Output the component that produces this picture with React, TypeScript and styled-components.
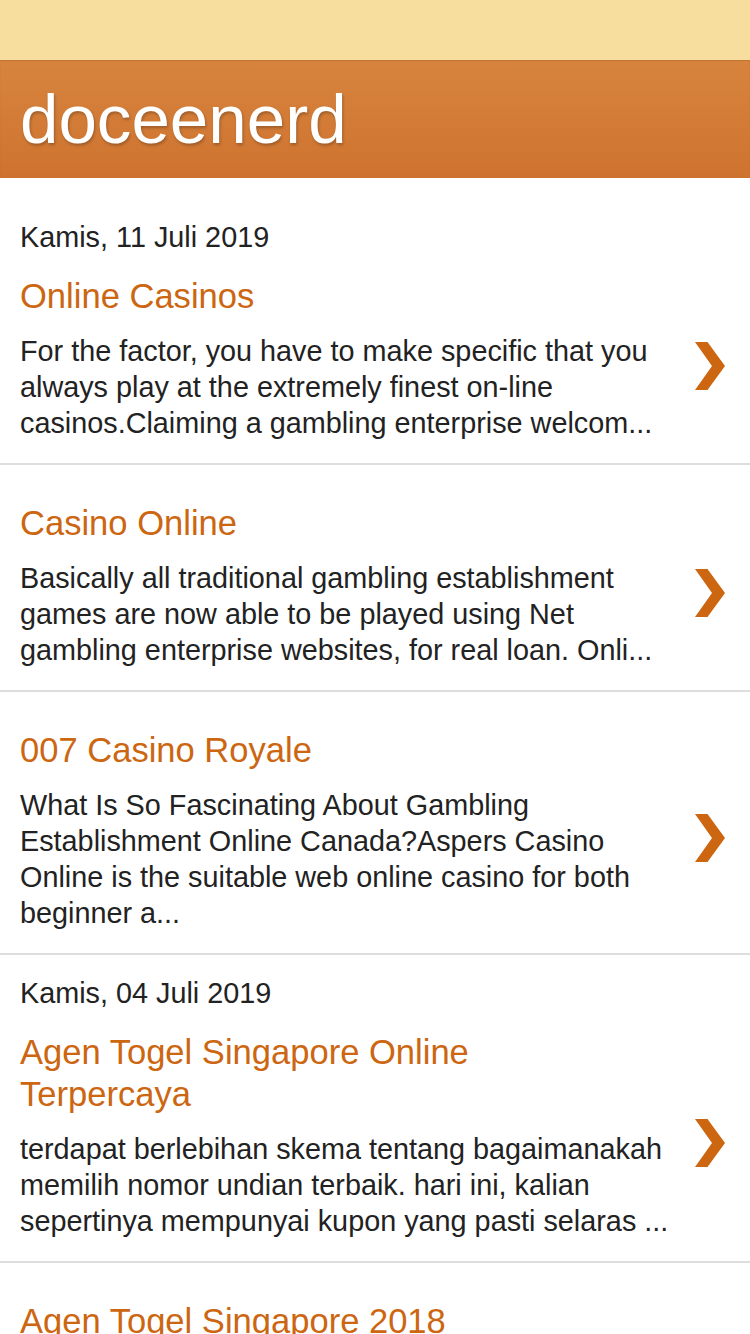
import React from "react";
import styled, { createGlobalStyle } from "styled-components";

interface Post {
    date?: string;
    title: string;
    snippet: string;
}

const posts: Post[] = [
    {
        date: "Kamis, 11 Juli 2019",
        title: "Online Casinos",
        snippet:
            "For the factor, you have to make specific that you always play at the extremely finest on-line casinos.Claiming a gambling enterprise welcom...",
    },
    {
        title: "Casino Online",
        snippet:
            "Basically all traditional gambling establishment games are now able to be played using Net gambling enterprise websites, for real loan. Onli...",
    },
    {
        title: "007 Casino Royale",
        snippet:
            "What Is So Fascinating About Gambling Establishment Online Canada?Aspers Casino Online is the suitable web online casino for both beginner a...",
    },
    {
        date: "Kamis, 04 Juli 2019",
        title: "Agen Togel Singapore Online Terpercaya",
        snippet:
            "terdapat berlebihan skema tentang bagaimanakah memilih nomor undian terbaik. hari ini, kalian sepertinya mempunyai kupon yang pasti selaras ...",
    },
    {
        title: "Agen Togel Singapore 2018",
        snippet:
            "Togel singapore adalah permainan yang banyak dimainkan oleh para pemain judi online di indonesia karena hasil keluaran yang terpercaya ...",
    },
];

const GlobalStyle = createGlobalStyle`
    html, body {
        margin: 0;
        padding: 0;
        background: #ffffff;
    }
    body {
        font-family: "Liberation Sans", Arial, sans-serif;
        font-size: 28.8px;
        color: #222222;
    }
`;

const Page = styled.div`
    width: 750px;
    height: 1334px;
    overflow: hidden;
    background: #ffffff;
`;

const TopBar = styled.div`
    height: 60px;
    background: #f7de9e;
`;

const Header = styled.header`
    height: 118px;
    padding: 0 20px;
    display: flex;
    align-items: center;
    background: linear-gradient(to bottom, #d7843f, #ce732f);
    box-shadow: inset 0 1px 1px rgba(120, 70, 20, 0.25);
`;

const BlogTitle = styled.h1`
    margin: 0;
    font-size: 69.12px;
    font-weight: normal;
    color: #ffffff;
    text-shadow: 1px 2px 3px rgba(0, 0, 0, 0.25);
`;

const Main = styled.main`
    padding-top: 21px;
`;

const PostItem = styled.article`
    padding: 21px 0 22px 20px;
    border-bottom: 2px solid #dddddd;
`;

const DateHeader = styled.div`
    line-height: 34px;
    margin-bottom: 5px;
    color: #222222;
`;

const Row = styled.div`
    padding-top: 16px;
    display: flex;
    align-items: center;
`;

const Contents = styled.div`
    width: 660px;
`;

const PostTitle = styled.h3`
    margin: 0;
    max-width: 600px;
    font-size: 34.56px;
    font-weight: normal;
    line-height: 42px;
    color: #cc6611;
`;

const Snippet = styled.div`
    margin-top: 16px;
    line-height: 36px;
    color: #222222;
`;

const Arrow = styled.div`
    display: flex;
    padding-left: 15px;
    margin-top: 16px;
`;

const Chevron = () => (
    <svg width="30" height="48" viewBox="0 0 30 48">
        <polygon points="0,0 12.5,0 30,24 12.5,48 0,48 17,24" fill="#cc6611" />
    </svg>
);

export default function App() {
    return (
        <Page>
            <GlobalStyle />
            <TopBar />
            <Header>
                <BlogTitle>doceenerd</BlogTitle>
            </Header>
            <Main>
                {posts.map((post) => (
                    <PostItem key={post.title}>
                        {post.date && <DateHeader>{post.date}</DateHeader>}
                        <Row>
                            <Contents>
                                <PostTitle>{post.title}</PostTitle>
                                <Snippet>{post.snippet}</Snippet>
                            </Contents>
                            <Arrow>
                                <Chevron />
                            </Arrow>
                        </Row>
                    </PostItem>
                ))}
            </Main>
        </Page>
    );
}
